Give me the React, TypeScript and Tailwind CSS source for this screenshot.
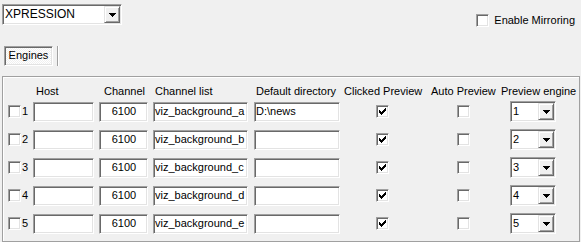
import React from 'react';

const sunken =
  'border border-t-[#a0a0a0] border-l-[#a0a0a0] border-r-white border-b-white shadow-[inset_1px_1px_0_#696969,inset_-1px_-1px_0_#e3e3e3]';
const raised =
  'border border-t-[#e3e3e3] border-l-[#e3e3e3] border-r-[#696969] border-b-[#696969] shadow-[inset_1px_1px_0_#fff,inset_-1px_-1px_0_#a0a0a0]';

const Check = ({ checked, className = '' }: { checked?: boolean; className?: string }) => (
  <span className={`box-border flex h-[13px] w-[13px] shrink-0 items-center justify-center bg-white ${sunken} ${className}`}>
    {checked && (
      <svg width="7" height="7" viewBox="0 0 7 7" shapeRendering="crispEdges">
        <path d="M6 0h1v3H6zM5 1h1v3H5zM4 2h1v3H4zM3 3h1v3H3zM2 4h1v3H2zM1 3h1v3H1zM0 2h1v3H0z" fill="#000" />
      </svg>
    )}
  </span>
);

const Arrow = () => (
  <svg width="7" height="4" viewBox="0 0 7 4" shapeRendering="crispEdges">
    <path d="M0 0h7v1H0zM1 1h5v1H1zM2 2h3v1H2zM3 3h1v1H3z" fill="#000" />
  </svg>
);

const Combo = ({ value, className = '' }: { value: string; className?: string }) => (
  <div className={`box-border flex h-[21px] shrink-0 items-center bg-white ${sunken} ${className}`}>
    <span className="flex-1 overflow-hidden whitespace-nowrap pl-[2px] leading-[15px]">{value}</span>
    <span className={`mr-[1px] box-border flex h-[17px] w-[16px] items-center justify-center bg-[#f0f0f0] ${raised}`}>
      <Arrow />
    </span>
  </div>
);

const TextBox = ({ value = '', className = '', center }: { value?: string; className?: string; center?: boolean }) => (
  <div
    className={`box-border flex h-[20px] shrink-0 items-center overflow-hidden whitespace-nowrap bg-white pl-[1px] ${center ? 'justify-center' : ''} ${sunken} ${className}`}
  >
    <span>{value}</span>
  </div>
);

const rows = ['a', 'b', 'c', 'd', 'e'];

export default function App() {
  return (
    <div className="h-[242px] w-[581px] overflow-hidden bg-[#f0f0f0] font-['Liberation_Sans',Arial,sans-serif] text-[11px] text-black">
      {/* top bar */}
      <div className="flex items-start justify-between">
        <Combo value="XPRESSION" className="ml-[2px] mt-[4px] w-[120px] text-[12px]" />
        <div className="mr-[6px] mt-[12px] flex items-center gap-[5px]">
          <Check />
          <span>Enable Mirroring</span>
        </div>
      </div>

      {/* tabs */}
      <div className="mt-[17px] flex h-[20px] items-stretch">
        <div
          className={`ml-[4px] box-border flex w-[49px] items-center justify-center border border-t-[#a0a0a0] border-l-[#a0a0a0] border-r-white border-b-white bg-[repeating-conic-gradient(#ffffff_0_25%,#f0f0f0_0_50%)] bg-[length:2px_2px] shadow-[inset_1px_1px_0_#696969,inset_-1px_-1px_0_#e3e3e3]`}
        >
          Engines
        </div>
        <div className="ml-[4px] w-[1px] bg-[#a0a0a0]" />
        <div className="w-[1px] bg-white" />
      </div>

      {/* panel */}
      <div className="ml-[2px] mt-[10px] box-border h-[166px] w-[578px] border border-[#a0a0a0] pt-[8px] shadow-[inset_1px_1px_0_#fff]">
        <div className="ml-[33px] flex h-[13px] items-center whitespace-nowrap leading-[13px]">
          <span className="w-[68px]">Host</span>
          <span className="w-[51px]">Channel</span>
          <span className="w-[101px]">Channel list</span>
          <span className="w-[88px]">Default directory</span>
          <span className="w-[87px]">Clicked Preview</span>
          <span className="w-[70px]">Auto Preview</span>
          <span>Preview engine</span>
        </div>

        <div className="mt-[4px] flex flex-col gap-[8px]">
          {rows.map((r, i) => (
            <div key={r} className="flex h-[20px] items-center">
              <Check className="ml-[5px]" />
              <span className="w-[12px] pl-[1px]">{i + 1}</span>
              <TextBox className="w-[61px]" />
              <TextBox className="ml-[5px] w-[49px]" value="6100" center />
              <TextBox className="ml-[5px] w-[95px]" value={`viz_background_${r}`} />
              <TextBox className="ml-[6px] w-[86px]" value={i === 0 ? 'D:\\news' : ''} />
              <Check className="ml-[36px]" checked />
              <Check className="ml-[68px]" />
              <Combo className="ml-[40px] w-[46px]" value={String(i + 1)} />
            </div>
          ))}
        </div>
      </div>
    </div>
  );
}
